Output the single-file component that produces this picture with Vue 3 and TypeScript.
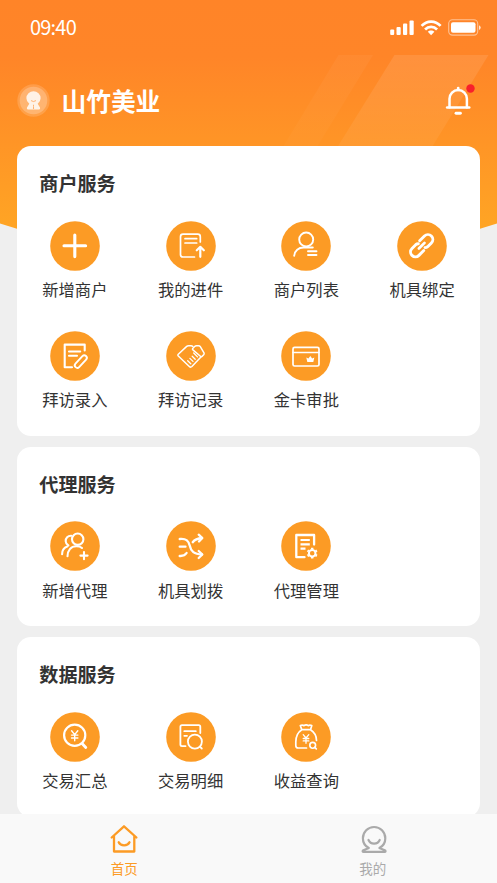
<script setup lang="ts">
interface Service {
  label: string
  icon: string
}
interface Section {
  title: string
  items: Service[]
}

const sections: Section[] = [
  {
    title: '商户服务',
    items: [
      { label: '新增商户', icon: 'plus' },
      { label: '我的进件', icon: 'upload' },
      { label: '商户列表', icon: 'userList' },
      { label: '机具绑定', icon: 'link' },
      { label: '拜访录入', icon: 'edit' },
      { label: '拜访记录', icon: 'handshake' },
      { label: '金卡审批', icon: 'card' },
    ],
  },
  {
    title: '代理服务',
    items: [
      { label: '新增代理', icon: 'usersPlus' },
      { label: '机具划拨', icon: 'shuffle' },
      { label: '代理管理', icon: 'docGear' },
    ],
  },
  {
    title: '数据服务',
    items: [
      { label: '交易汇总', icon: 'yenSearch' },
      { label: '交易明细', icon: 'docSearch' },
      { label: '收益查询', icon: 'moneyBag' },
    ],
  },
]
</script>

<template>
  <div class="app">
    <svg class="backdrop" viewBox="0 0 497 240">
      <defs>
        <linearGradient id="sky" x1="0" y1="0" x2="0" y2="1">
          <stop offset="0" stop-color="#ff8428" />
          <stop offset="0.25" stop-color="#ff8528" />
          <stop offset="1" stop-color="#ffa524" />
        </linearGradient>
        <linearGradient id="beam" x1="0" y1="0" x2="0" y2="1">
          <stop offset="0" stop-color="#fff" stop-opacity="0.1" />
          <stop offset="1" stop-color="#fff" stop-opacity="0.05" />
        </linearGradient>
        <linearGradient id="beamSoft" x1="0" y1="0" x2="0" y2="1">
          <stop offset="0" stop-color="#fff" stop-opacity="0.04" />
          <stop offset="1" stop-color="#fff" stop-opacity="0.02" />
        </linearGradient>
      </defs>
      <path d="M0 0H497V223.500L476 230H21L0 223.500Z" fill="url(#sky)" />
      <path d="M338.500 55H373L317 147H283Z" fill="url(#beamSoft)" />
      <path d="M394.500 55H488.500L432 147H337.500Z" fill="url(#beam)" />
    </svg>

    <div class="status">
      <span class="time">09:40</span>
      <svg class="signals" width="92" height="20" viewBox="0 0 92 20" fill="#fff">
        <rect x="0.200" y="12.500" width="4" height="5.500" rx="1" />
        <rect x="6.500" y="10" width="4.200" height="8" rx="1" />
        <rect x="13" y="6.500" width="4.200" height="11.500" rx="1" />
        <rect x="19.500" y="3.500" width="4.200" height="14.500" rx="1" />
        <g fill="none" stroke="#fff" stroke-width="2.700">
          <path d="M31.600 8.900C37 3.200 45.200 3.200 50.600 8.900" />
          <path d="M35.100 12.500C38.500 8.900 43.700 8.900 47.100 12.500" />
        </g>
        <path d="M37.800 14.800C39.600 13 42.600 13 44.400 14.800L41.100 18.200Z" />
        <rect x="58.700" y="2.700" width="29" height="15.400" rx="3.800" fill="none" stroke="#fff" stroke-opacity="0.5" stroke-width="1.100" />
        <rect x="61" y="5.200" width="24.500" height="10.600" rx="2" />
        <path d="M89 8.200Q90.700 9 90.700 10.600T89 13Z" fill-opacity="0.8" />
      </svg>
    </div>

    <header class="header">
      <svg class="avatar" width="33" height="33" viewBox="0 0 33 33">
        <circle cx="16.500" cy="16.500" r="16.200" fill="#fff" fill-opacity="0.16" />
        <circle cx="16.500" cy="16.500" r="13.800" fill="#fff" fill-opacity="0.22" />
        <path d="M16.500 7.300A7.100 7.100 0 0 0 9.400 14.300Q9.400 17.700 12.300 19.700L10 23.400Q9.400 25.500 11 25.500H22Q23.600 25.500 23 23.400L20.700 19.700Q23.600 17.700 23.600 14.300A7.100 7.100 0 0 0 16.500 7.300Z" fill="#fff" fill-opacity="0.83" />
        <path d="M14 16.600Q16.500 18.500 19 16.600" fill="none" stroke="#ffad69" stroke-width="0.900" />
        <path d="M15.900 20.800H17.100L16.800 22.200L17.100 24.500L16.500 25.300L15.900 24.500L16.200 22.200Z" fill="#ffad69" />
      </svg>
      <h1 class="name">山竹美业</h1>
      <svg class="bell" width="34" height="34" viewBox="0 0 34 34" fill="none" stroke="#fff" stroke-linecap="round">
        <path d="M7.500 24.300V15.800A8.700 8.700 0 0 1 24.900 15.800V24.300" stroke-width="2.500" />
        <path d="M5.200 24.500H27.200" stroke-width="2.700" />
        <path d="M16.200 5V7" stroke-width="2.700" />
        <path d="M14 30.200H18.400" stroke-width="2.900" />
        <circle cx="28.500" cy="5.500" r="4.200" fill="#f8202b" stroke="none" />
      </svg>
    </header>

    <main class="content">
      <section v-for="section in sections" :key="section.title" class="card">
        <h2 class="card-title">{{ section.title }}</h2>
        <div class="grid">
          <div v-for="item in section.items" :key="item.label" class="service">
            <svg class="icon" viewBox="0 0 50 50" fill="none" stroke="#fff" stroke-width="1.900" stroke-linecap="round" stroke-linejoin="round">
              <circle cx="25" cy="25" r="24.800" fill="#fc9b25" stroke="none" />

              <path v-if="item.icon === 'plus'" d="M24.800 14V35.600M14 24.800H35.600" stroke-width="3.100" />

              <template v-else-if="item.icon === 'upload'">
                <path d="M34.300 21V15.700Q34.300 13.200 31.800 13.200H17Q14.500 13.200 14.500 15.700V33.500Q14.500 36 17 36H28.500" stroke-width="1.700" />
                <path d="M19 17.700H30.700M19 22H30.700" stroke-width="1.700" />
                <path d="M34.300 35.800V26.300M30.800 29.300L34.300 25.800L37.800 29.300" stroke-width="2.200" />
              </template>

              <template v-else-if="item.icon === 'userList'">
                <circle cx="25.200" cy="18.500" r="7" />
                <path d="M13.200 34.800C13.500 29.500 17.800 26.500 22.500 26.500H31.800" />
                <path d="M27 30.200H35.500M27 34H35.500" />
              </template>

              <g v-else-if="item.icon === 'link'" transform="rotate(-45 24.700 24.700)" stroke-width="2.900">
                <path d="M22.700 29.600H15.900A4.900 4.900 0 0 1 15.900 19.800H21.200Q22.700 19.900 23.700 21" />
                <path d="M26.700 19.800H33.500A4.900 4.900 0 0 1 33.500 29.600H28.200Q26.700 29.500 25.700 28.400" />
                <path d="M20.700 24.700H28.700" stroke-width="2.700" />
              </g>

              <template v-else-if="item.icon === 'edit'">
                <path d="M34.700 19.500V13.600H14.700V36.300H22" stroke-width="2.100" />
                <path d="M19 20.500H30.200M19 24.800H27" stroke-width="2.100" />
                <rect x="23.200" y="28.100" width="15.200" height="5" rx="2.500" transform="rotate(-47 30.800 30.600)" stroke-width="1.900" />
              </template>

              <g v-else-if="item.icon === 'handshake'" stroke-width="1.500">
                <path d="M26.800 15.300Q26 14.700 25 14.700H22.500Q21.500 14.700 20.700 15.400L12.300 23.200Q11.400 24.100 12.300 25L23.300 35.500Q24.600 36.700 25.900 35.500L34.700 26.300" />
                <path d="M26.700 17.500L28.600 15.500Q29.400 14.700 30.600 14.700H32.500Q33.700 14.700 34.300 15.700L38 21.900Q38.500 22.900 37.700 23.700L36 25.400Q35.200 26.100 34.400 25.200L26.900 18.900Q26.100 18.200 26.700 17.500Z" />
                <path d="M21.700 29.700L24.800 32.700M23.900 27.400L27 30.400M26.200 25.200L29.200 28.200M27.700 22L31.500 25.900" stroke-width="1.300" />
              </g>

              <template v-else-if="item.icon === 'card'">
                <rect x="12" y="16.300" width="26" height="18.700" rx="1.600" stroke-width="1.700" />
                <path d="M12 21.500H38" stroke-width="1.600" />
                <path d="M25.300 26.400L27.400 27.400L29.300 25L31.200 27.400L33.300 26.400L32.300 31H26.300Z" fill="#fff" stroke="none" />
              </template>

              <g v-else-if="item.icon === 'usersPlus'" stroke-width="2.100">
                <circle cx="27.700" cy="18.200" r="5.700" />
                <path d="M21.300 14.700C17.800 14.500 15.500 17 15.700 20.200C15.800 22.200 17 23.700 18.400 24.500" />
                <path d="M17.500 35.300C17.500 29.500 21 25.300 26.200 25.300C28.800 25.300 30.700 25.800 32 27" />
                <path d="M12.100 33.300C12.100 29.500 14.200 26.500 17.300 25.500" />
                <path d="M34 31V38.200M30.400 34.600H37.600" />
              </g>

              <g v-else-if="item.icon === 'shuffle'" stroke-width="2.300">
                <path d="M13.700 18C20 17.300 22.500 19.500 23.700 24.500C25 30.500 28 33.300 36 33.500" />
                <path d="M26.700 21.200C28.700 18.500 31.500 17.300 36 17" />
                <path d="M32.700 13.700L36.300 17L33 20.500M32.700 30L36.300 33.500L32.700 37" />
                <path d="M13.700 25.700H19.500M13.700 35C17 35.200 19.200 34.200 20.600 32" />
              </g>

              <template v-else-if="item.icon === 'docGear'">
                <path d="M33.100 23.500V14H15.300V36.200H23.500" stroke-width="2.300" />
                <path d="M19.500 19H28.800M19.500 23.400H28.800M19.500 27.700H24.500" stroke-width="2.200" stroke-linecap="butt" />
                <circle cx="31.200" cy="32.200" r="3.300" stroke-width="2" />
                <path d="M31.200 28.300V26.800M31.200 36.100V37.600M34.600 30.250L35.900 29.500M27.800 30.250L26.500 29.500M34.600 34.150L35.900 34.900M27.800 34.150L26.500 34.900" stroke-width="2.400" stroke-linecap="butt" />
              </template>

              <template v-else-if="item.icon === 'yenSearch'">
                <circle cx="24.700" cy="23.300" r="10.600" stroke-width="2.200" />
                <path d="M32.300 31.800L35.800 35.500" stroke-width="2.800" />
                <path d="M21.600 18.700L24.700 22.600L27.800 18.700M24.700 22.600V28.800M21.500 23.100H27.900M21.500 26H27.900" stroke-width="1.400" />
              </template>

              <g v-else-if="item.icon === 'docSearch'" stroke-width="1.800">
                <path d="M34.300 21V14.800Q34.300 13.200 32.700 13.200H16Q14.400 13.200 14.400 14.800V32.600Q14.400 34.200 16 34.200H19.500" />
                <path d="M18.300 19.200H29.800M18.300 23.800H21" />
                <circle cx="28.900" cy="29.600" r="7" />
                <path d="M33.900 34.600L35.800 36.500" />
              </g>

              <g v-else-if="item.icon === 'moneyBag'" stroke-width="1.700">
                <path d="M29.500 17.700C33.500 20.200 35.500 24 35.500 28.500M25.500 36H17.200Q14.800 36 14.800 33.500V30C14.800 24.500 16.800 20.200 20.800 17.700H29.500L30.800 13.500Q28.500 12.700 27.500 13.700Q25.200 12.200 22.700 13.700Q21.500 12.700 19.300 13.500L20.800 17.700" />
                <path d="M22.200 22.700L25 26L27.800 22.700M25 26V31.300M22.200 26.500H27.800M22.200 28.900H27.800" stroke-width="1.300" />
                <circle cx="31.700" cy="33.300" r="2.900" stroke-width="1.600" />
                <path d="M33.800 35.400L35.300 36.800" />
              </g>
            </svg>
            <span class="label">{{ item.label }}</span>
          </div>
        </div>
      </section>
    </main>

    <nav class="tabs">
      <div class="tab active">
        <svg class="tab-icon" viewBox="0 0 30 30" fill="none" stroke="currentColor" stroke-width="2.300" stroke-linecap="round" stroke-linejoin="round">
          <path d="M2.700 14.500L15 3.300L27.400 14.500M5 13V28.500H25.300V13" />
          <path d="M9.700 19.300C11.700 23.500 18.500 23.500 20.500 19.300" />
        </svg>
        <span class="tab-label">首页</span>
      </div>
      <div class="tab">
        <svg class="tab-icon" viewBox="0 0 30 30" fill="none" stroke="currentColor" stroke-width="2.200" stroke-linecap="round" stroke-linejoin="round">
          <path d="M10.800 25C7 23 4.900 19.500 4.900 15.200A11.200 11.200 0 0 1 27.300 15.200C27.300 19.500 25.200 23 21.400 25L27.300 27.500Q28 28.800 26.700 28.800H5.500Q4.200 28.800 4.900 27.500Z" />
          <path d="M10.500 17C12.500 21.700 19.700 21.700 21.700 17" />
        </svg>
        <span class="tab-label">我的</span>
      </div>
    </nav>
  </div>
</template>

<style>
body {
  margin: 0;
  background: #efefef;
}
</style>

<style scoped>
.app {
  position: relative;
  display: flex;
  flex-direction: column;
  height: 100vh;
  overflow: hidden;
  background: #efefef;
  font-family: 'Noto Sans CJK SC', sans-serif;
  color: #333;
}
.backdrop {
  position: absolute;
  top: 0;
  left: 0;
  width: 100%;
  height: 240px;
}
.status {
  position: relative;
  display: flex;
  align-items: center;
  justify-content: space-between;
  flex: none;
  box-sizing: border-box;
  height: 55px;
  padding: 0 15px 0 30px;
  color: #fff;
}
.time {
  margin-bottom: 2px;
  font-size: 20px;
  line-height: 28px;
  letter-spacing: -0.8px;
}
.signals {
  flex: none;
  margin-bottom: 1px;
}
.header {
  position: relative;
  display: flex;
  align-items: center;
  flex: none;
  box-sizing: border-box;
  height: 91.3px;
  padding: 0 21px 0 17px;
  color: #fff;
}
.avatar {
  flex: none;
}
.name {
  flex: 1;
  margin: 0 0 2px 11.5px;
  font-size: 24.7px;
  line-height: 36px;
  font-weight: 700;
}
.bell {
  flex: none;
  margin-bottom: 1px;
}
.content {
  position: relative;
  display: flex;
  flex-direction: column;
  flex: 1;
  gap: 11px;
  min-height: 0;
  overflow: hidden;
  padding: 0 17px;
}
.card {
  flex: none;
  border-radius: 14px;
  background: #fff;
  padding-bottom: 23.5px;
}
.card-title {
  margin: 0;
  padding: 23px 22.3px 22.5px;
  font-size: 19.1px;
  line-height: 29px;
  font-weight: 700;
}
.grid {
  display: grid;
  grid-template-columns: repeat(4, 1fr);
  row-gap: 28.5px;
}
.service {
  display: flex;
  flex-direction: column;
  align-items: center;
}
.icon {
  width: 50px;
  height: 50px;
}
.label {
  margin-top: 5.5px;
  font-size: 16.3px;
  line-height: 26px;
  white-space: nowrap;
}
.tabs {
  position: relative;
  display: flex;
  flex: none;
  height: 69.5px;
  background: #f9f9f9;
}
.tab {
  display: flex;
  flex: 1;
  flex-direction: column;
  align-items: center;
  color: #aaa;
}
.tab.active {
  color: #fc9b25;
}
.tab-icon {
  width: 30px;
  height: 30px;
  margin-top: 9px;
}
.tab-label {
  margin-top: 5.5px;
  font-size: 13.5px;
  line-height: 20px;
}
</style>
